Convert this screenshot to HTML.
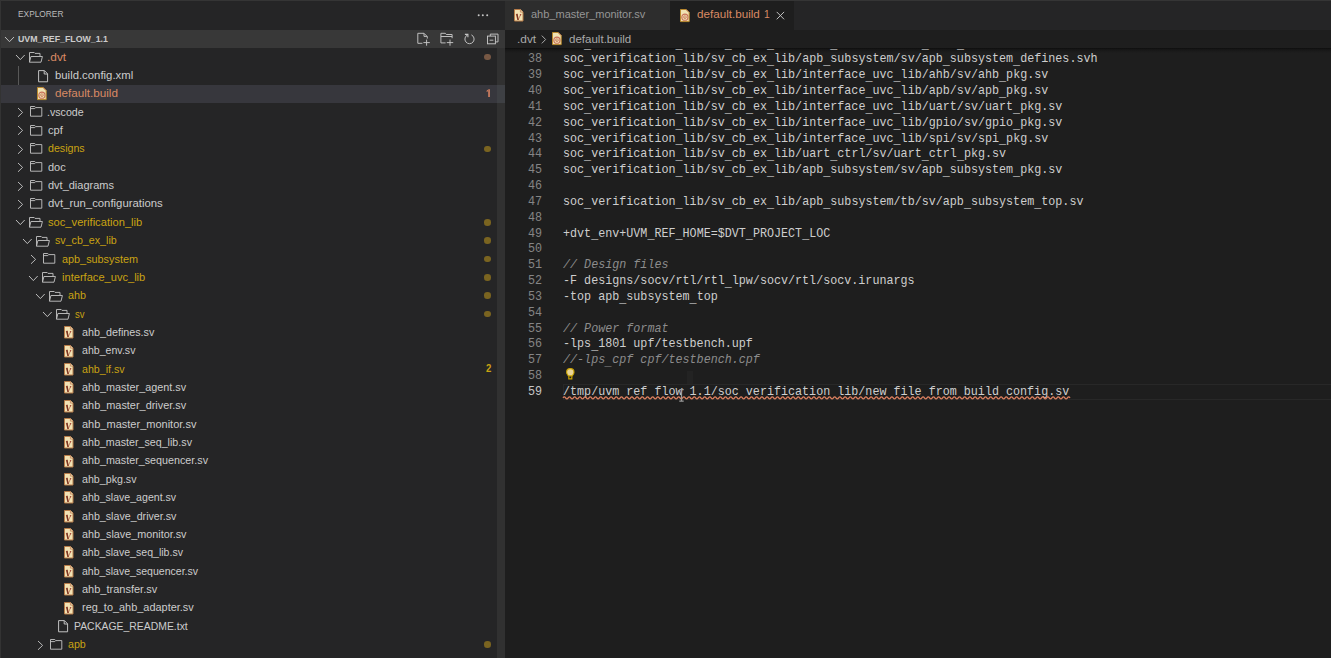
<!DOCTYPE html>
<html><head><meta charset="utf-8">
<style>
html,body{margin:0;padding:0;width:1331px;height:658px;overflow:hidden;background:#1e1e1e;}
body{position:relative;font-family:"Liberation Sans",sans-serif;}
div,svg{position:absolute;box-sizing:border-box;}
.ic{display:block;overflow:visible}
.t{line-height:30px;white-space:pre;transform-origin:0 0;font-family:"Liberation Sans",sans-serif}
#topb{left:0;top:0;width:1331px;height:1px;background:#353535;z-index:5}
#leftb{left:0;top:0;width:1px;height:658px;background:#333333;z-index:5}
#side{left:0;top:0;width:505px;height:658px;background:#252526;overflow:hidden}
#more{left:477px;top:13.8px;width:12px;height:3px}
#hdr{left:0;top:30px;width:505px;height:18px;background:#383838}
.sel{left:0;width:497px;background:#37373d}
.dot{left:484.2px;width:6.6px;height:6.6px;border-radius:50%}
#sbar{left:497px;top:48px;width:8px;height:610px;background:#313131}
#sbarsel{left:497px;top:84.72px;width:8px;height:18.36px;background:#3e4044}
#iguide{left:18px;top:66.36px;width:1px;height:36.72px;background:#585858}
#tabs{left:505px;top:0;width:826px;height:30px;background:#252526}
.tab{top:0;height:30px}
#bc{left:505px;top:30px;width:826px;height:17.5px;background:#1e1e1e}
#edshadow{left:505px;top:47.5px;width:826px;height:5px;background:linear-gradient(#0e0e0e,#171717 35%,rgba(30,30,30,0))}
.ln,.tx,.cm{line-height:30px;font-family:"Liberation Mono",monospace;font-size:12.6px;white-space:pre;transform-origin:0 0;transform:scaleX(0.9304)}
.ln{color:#858585}
.ln.act{color:#c6c6c6}
.tx,.cm{left:563.0px;color:#cecece}
.cm{font-style:italic;color:#8c8c8c}
.us{position:relative;top:1.8px}
#curline{left:563px;top:383.7px;width:768px;height:15.83px;border:1.6px solid #282828;border-right:none}
</style></head><body>
<div id="side">
  <svg id="more" width="12" height="3" viewBox="0 0 12 3"><circle cx="1.7" cy="1.3" r="1" fill="#c5c5c5"/><circle cx="5.8" cy="1.3" r="1" fill="#c5c5c5"/><circle cx="10.2" cy="1.3" r="1" fill="#c5c5c5"/></svg>
  <div id="hdr"></div>
  <svg class="ic" style="left:3.90px;top:35.80px" width="11.0" height="6.7"><path d="M1 1 L5.50 5.70 L10.00 1" fill="none" stroke="#c5c5c5" stroke-width="0.95"/></svg>
  <svg class="ic" style="left:410px;top:30px" width="92" height="18" viewBox="410 30 92 18"><g fill="none" stroke="#c5c5c5" stroke-width="0.95">
    <path d="M417.8 33.3 V43.3 H422.4 M417.8 33.3 H424.0 L427.3 36.6 V38.6 M424.0 33.5 V36.4 H427.1 M423.4 42.6 H429.8 M426.6 39.6 V45.7"/>
    <path d="M445.6 42.9 H440.9 V33.3 H445.3 L446.3 34.5 H452.1 V38.2 M440.9 36.5 H452.1 M446.8 42.6 H453.2 M450.0 39.6 V45.7"/>
    <path d="M467.6 34.9 A4.6 4.6 0 1 0 471.4 34.9"/>
    <path d="M464.9 34.4 H467.9 V37.3" stroke-width="1.1"/>
    <path d="M490.3 36.0 V34.1 H498.0 V41.9 H495.4"/>
    <rect x="487.5" y="36.1" width="7.9" height="7.7" fill="#383838"/>
    <path d="M489.6 40.2 H493.4"/>
  </g></svg>
  <div id="sbar"></div>
  <div id="sbarsel"></div>
  <div id="iguide"></div>
<svg class="ic" style="left:15.00px;top:54.20px" width="10.7" height="6.6"><path d="M1 1 L5.35 5.60 L9.70 1" fill="none" stroke="#c5c5c5" stroke-width="0.95"/></svg>
<svg class="ic" style="left:29.00px;top:51.95px" width="15" height="12" viewBox="0 0 15 12"><path d="M0.5 10.2 V0.5 H5.2 L6.0 1.4 H11.0 V4.3 M0.5 10.2 H12.0 L13.4 4.5 H1.9 L0.5 10.2" fill="none" stroke="#bdbdbd" stroke-width="0.95" stroke-linejoin="round"/></svg>
<div class="dot" style="top:53.70px;background:#775844"></div>
<svg class="ic" style="left:37.57px;top:69.56px" width="11" height="13" viewBox="0 0 11 13"><path d="M0.6 0.6 H6.4 L9.6 3.8 V11.8 H0.6 Z M6.2 0.6 V4.0 H9.6" fill="none" stroke="#c2c2c2" stroke-width="1" stroke-linejoin="round"/></svg>
<div class="sel" style="top:84.72px;height:18.36px"></div>
<svg class="ic" style="left:37.27px;top:87.12px" width="10" height="14" viewBox="0 0 10 14"><path d="M0.5 0.5 H6.2 L9.2 3.5 V12.6 H0.5 Z" fill="#f0e2b2" stroke="#b8882c" stroke-width="1"/><path d="M6.2 0.5 L9.2 3.5" fill="none" stroke="#c87858" stroke-width="0.8"/><circle cx="4.9" cy="8.2" r="3.1" fill="none" stroke="#c8705a" stroke-width="1.1"/><path d="M4.9 6.4 L6.7 8.2 L4.9 10.0 L3.1 8.2 Z" fill="none" stroke="#c8705a" stroke-width="0.8"/><circle cx="4.9" cy="8.2" r="0.6" fill="#b86a40"/></svg>
<svg class="ic" style="left:16.80px;top:107.08px" width="6.6" height="10.8"><path d="M1 1 L5.60 5.40 L1 9.80" fill="none" stroke="#c0c0c0" stroke-width="0.95"/></svg>
<svg class="ic" style="left:29.90px;top:106.38px" width="14" height="12" viewBox="0 0 14 12"><path d="M0.5 0.5 H4.8 L5.8 1.6 H11.8 V10.2 H0.5 Z M0.5 2.6 H4.8 L5.8 1.6" fill="none" stroke="#bdbdbd" stroke-width="0.95"/></svg>
<svg class="ic" style="left:16.80px;top:125.44px" width="6.6" height="10.8"><path d="M1 1 L5.60 5.40 L1 9.80" fill="none" stroke="#c0c0c0" stroke-width="0.95"/></svg>
<svg class="ic" style="left:29.90px;top:124.74px" width="14" height="12" viewBox="0 0 14 12"><path d="M0.5 0.5 H4.8 L5.8 1.6 H11.8 V10.2 H0.5 Z M0.5 2.6 H4.8 L5.8 1.6" fill="none" stroke="#bdbdbd" stroke-width="0.95"/></svg>
<svg class="ic" style="left:16.80px;top:143.80px" width="6.6" height="10.8"><path d="M1 1 L5.60 5.40 L1 9.80" fill="none" stroke="#c0c0c0" stroke-width="0.95"/></svg>
<svg class="ic" style="left:29.90px;top:143.10px" width="14" height="12" viewBox="0 0 14 12"><path d="M0.5 0.5 H4.8 L5.8 1.6 H11.8 V10.2 H0.5 Z M0.5 2.6 H4.8 L5.8 1.6" fill="none" stroke="#bdbdbd" stroke-width="0.95"/></svg>
<div class="dot" style="top:145.50px;background:#7a6420"></div>
<svg class="ic" style="left:16.80px;top:162.16px" width="6.6" height="10.8"><path d="M1 1 L5.60 5.40 L1 9.80" fill="none" stroke="#c0c0c0" stroke-width="0.95"/></svg>
<svg class="ic" style="left:29.90px;top:161.46px" width="14" height="12" viewBox="0 0 14 12"><path d="M0.5 0.5 H4.8 L5.8 1.6 H11.8 V10.2 H0.5 Z M0.5 2.6 H4.8 L5.8 1.6" fill="none" stroke="#bdbdbd" stroke-width="0.95"/></svg>
<svg class="ic" style="left:16.80px;top:180.52px" width="6.6" height="10.8"><path d="M1 1 L5.60 5.40 L1 9.80" fill="none" stroke="#c0c0c0" stroke-width="0.95"/></svg>
<svg class="ic" style="left:29.90px;top:179.82px" width="14" height="12" viewBox="0 0 14 12"><path d="M0.5 0.5 H4.8 L5.8 1.6 H11.8 V10.2 H0.5 Z M0.5 2.6 H4.8 L5.8 1.6" fill="none" stroke="#bdbdbd" stroke-width="0.95"/></svg>
<svg class="ic" style="left:16.80px;top:198.88px" width="6.6" height="10.8"><path d="M1 1 L5.60 5.40 L1 9.80" fill="none" stroke="#c0c0c0" stroke-width="0.95"/></svg>
<svg class="ic" style="left:29.90px;top:198.18px" width="14" height="12" viewBox="0 0 14 12"><path d="M0.5 0.5 H4.8 L5.8 1.6 H11.8 V10.2 H0.5 Z M0.5 2.6 H4.8 L5.8 1.6" fill="none" stroke="#bdbdbd" stroke-width="0.95"/></svg>
<svg class="ic" style="left:15.00px;top:219.44px" width="10.7" height="6.6"><path d="M1 1 L5.35 5.60 L9.70 1" fill="none" stroke="#c5c5c5" stroke-width="0.95"/></svg>
<svg class="ic" style="left:29.00px;top:217.19px" width="15" height="12" viewBox="0 0 15 12"><path d="M0.5 10.2 V0.5 H5.2 L6.0 1.4 H11.0 V4.3 M0.5 10.2 H12.0 L13.4 4.5 H1.9 L0.5 10.2" fill="none" stroke="#bdbdbd" stroke-width="0.95" stroke-linejoin="round"/></svg>
<div class="dot" style="top:218.94px;background:#7a6420"></div>
<svg class="ic" style="left:21.67px;top:237.80px" width="10.7" height="6.6"><path d="M1 1 L5.35 5.60 L9.70 1" fill="none" stroke="#c5c5c5" stroke-width="0.95"/></svg>
<svg class="ic" style="left:35.67px;top:235.55px" width="15" height="12" viewBox="0 0 15 12"><path d="M0.5 10.2 V0.5 H5.2 L6.0 1.4 H11.0 V4.3 M0.5 10.2 H12.0 L13.4 4.5 H1.9 L0.5 10.2" fill="none" stroke="#bdbdbd" stroke-width="0.95" stroke-linejoin="round"/></svg>
<div class="dot" style="top:237.30px;background:#7a6420"></div>
<svg class="ic" style="left:30.13px;top:253.96px" width="6.6" height="10.8"><path d="M1 1 L5.60 5.40 L1 9.80" fill="none" stroke="#c0c0c0" stroke-width="0.95"/></svg>
<svg class="ic" style="left:43.23px;top:253.26px" width="14" height="12" viewBox="0 0 14 12"><path d="M0.5 0.5 H4.8 L5.8 1.6 H11.8 V10.2 H0.5 Z M0.5 2.6 H4.8 L5.8 1.6" fill="none" stroke="#bdbdbd" stroke-width="0.95"/></svg>
<div class="dot" style="top:255.66px;background:#7a6420"></div>
<svg class="ic" style="left:28.33px;top:274.52px" width="10.7" height="6.6"><path d="M1 1 L5.35 5.60 L9.70 1" fill="none" stroke="#c5c5c5" stroke-width="0.95"/></svg>
<svg class="ic" style="left:42.33px;top:272.27px" width="15" height="12" viewBox="0 0 15 12"><path d="M0.5 10.2 V0.5 H5.2 L6.0 1.4 H11.0 V4.3 M0.5 10.2 H12.0 L13.4 4.5 H1.9 L0.5 10.2" fill="none" stroke="#bdbdbd" stroke-width="0.95" stroke-linejoin="round"/></svg>
<div class="dot" style="top:274.02px;background:#7a6420"></div>
<svg class="ic" style="left:35.00px;top:292.88px" width="10.7" height="6.6"><path d="M1 1 L5.35 5.60 L9.70 1" fill="none" stroke="#c5c5c5" stroke-width="0.95"/></svg>
<svg class="ic" style="left:49.00px;top:290.63px" width="15" height="12" viewBox="0 0 15 12"><path d="M0.5 10.2 V0.5 H5.2 L6.0 1.4 H11.0 V4.3 M0.5 10.2 H12.0 L13.4 4.5 H1.9 L0.5 10.2" fill="none" stroke="#bdbdbd" stroke-width="0.95" stroke-linejoin="round"/></svg>
<div class="dot" style="top:292.38px;background:#7a6420"></div>
<svg class="ic" style="left:41.67px;top:311.24px" width="10.7" height="6.6"><path d="M1 1 L5.35 5.60 L9.70 1" fill="none" stroke="#c5c5c5" stroke-width="0.95"/></svg>
<svg class="ic" style="left:55.67px;top:308.99px" width="15" height="12" viewBox="0 0 15 12"><path d="M0.5 10.2 V0.5 H5.2 L6.0 1.4 H11.0 V4.3 M0.5 10.2 H12.0 L13.4 4.5 H1.9 L0.5 10.2" fill="none" stroke="#bdbdbd" stroke-width="0.95" stroke-linejoin="round"/></svg>
<div class="dot" style="top:310.74px;background:#7a6420"></div>
<svg class="ic" style="left:63.54px;top:326.15px" width="10" height="13" viewBox="0 0 10 13"><path d="M0.5 0.5 H6.4 L9.0 3.1 V12.0 H0.5 Z" fill="#f2e2b4" stroke="#b87c48" stroke-width="1"/><path d="M6.4 0.5 V3.1 H9.0" fill="#eadcb0" stroke="#c08058" stroke-width="0.8"/><path d="M4.3 10.6 L6.7 5.4" stroke="#b86a50" stroke-width="0.8"/><path d="M1.8 4.9 L3.6 4.8 L4.9 10.9 L3.3 11.0 Z" fill="#a85238"/><path d="M2.5 4.9 L3.4 4.8 L4.5 10.9 L3.7 11.0 Z" fill="#6a3220"/><path d="M5.7 5.0 L7.4 5.0 L6.5 7.3 Z" fill="#a84c3c"/></svg>
<svg class="ic" style="left:63.54px;top:344.51px" width="10" height="13" viewBox="0 0 10 13"><path d="M0.5 0.5 H6.4 L9.0 3.1 V12.0 H0.5 Z" fill="#f2e2b4" stroke="#b87c48" stroke-width="1"/><path d="M6.4 0.5 V3.1 H9.0" fill="#eadcb0" stroke="#c08058" stroke-width="0.8"/><path d="M4.3 10.6 L6.7 5.4" stroke="#b86a50" stroke-width="0.8"/><path d="M1.8 4.9 L3.6 4.8 L4.9 10.9 L3.3 11.0 Z" fill="#a85238"/><path d="M2.5 4.9 L3.4 4.8 L4.5 10.9 L3.7 11.0 Z" fill="#6a3220"/><path d="M5.7 5.0 L7.4 5.0 L6.5 7.3 Z" fill="#a84c3c"/></svg>
<svg class="ic" style="left:63.54px;top:362.87px" width="10" height="13" viewBox="0 0 10 13"><path d="M0.5 0.5 H6.4 L9.0 3.1 V12.0 H0.5 Z" fill="#f2e2b4" stroke="#b87c48" stroke-width="1"/><path d="M6.4 0.5 V3.1 H9.0" fill="#eadcb0" stroke="#c08058" stroke-width="0.8"/><path d="M4.3 10.6 L6.7 5.4" stroke="#b86a50" stroke-width="0.8"/><path d="M1.8 4.9 L3.6 4.8 L4.9 10.9 L3.3 11.0 Z" fill="#a85238"/><path d="M2.5 4.9 L3.4 4.8 L4.5 10.9 L3.7 11.0 Z" fill="#6a3220"/><path d="M5.7 5.0 L7.4 5.0 L6.5 7.3 Z" fill="#a84c3c"/></svg>
<svg class="ic" style="left:63.54px;top:381.23px" width="10" height="13" viewBox="0 0 10 13"><path d="M0.5 0.5 H6.4 L9.0 3.1 V12.0 H0.5 Z" fill="#f2e2b4" stroke="#b87c48" stroke-width="1"/><path d="M6.4 0.5 V3.1 H9.0" fill="#eadcb0" stroke="#c08058" stroke-width="0.8"/><path d="M4.3 10.6 L6.7 5.4" stroke="#b86a50" stroke-width="0.8"/><path d="M1.8 4.9 L3.6 4.8 L4.9 10.9 L3.3 11.0 Z" fill="#a85238"/><path d="M2.5 4.9 L3.4 4.8 L4.5 10.9 L3.7 11.0 Z" fill="#6a3220"/><path d="M5.7 5.0 L7.4 5.0 L6.5 7.3 Z" fill="#a84c3c"/></svg>
<svg class="ic" style="left:63.54px;top:399.59px" width="10" height="13" viewBox="0 0 10 13"><path d="M0.5 0.5 H6.4 L9.0 3.1 V12.0 H0.5 Z" fill="#f2e2b4" stroke="#b87c48" stroke-width="1"/><path d="M6.4 0.5 V3.1 H9.0" fill="#eadcb0" stroke="#c08058" stroke-width="0.8"/><path d="M4.3 10.6 L6.7 5.4" stroke="#b86a50" stroke-width="0.8"/><path d="M1.8 4.9 L3.6 4.8 L4.9 10.9 L3.3 11.0 Z" fill="#a85238"/><path d="M2.5 4.9 L3.4 4.8 L4.5 10.9 L3.7 11.0 Z" fill="#6a3220"/><path d="M5.7 5.0 L7.4 5.0 L6.5 7.3 Z" fill="#a84c3c"/></svg>
<svg class="ic" style="left:63.54px;top:417.95px" width="10" height="13" viewBox="0 0 10 13"><path d="M0.5 0.5 H6.4 L9.0 3.1 V12.0 H0.5 Z" fill="#f2e2b4" stroke="#b87c48" stroke-width="1"/><path d="M6.4 0.5 V3.1 H9.0" fill="#eadcb0" stroke="#c08058" stroke-width="0.8"/><path d="M4.3 10.6 L6.7 5.4" stroke="#b86a50" stroke-width="0.8"/><path d="M1.8 4.9 L3.6 4.8 L4.9 10.9 L3.3 11.0 Z" fill="#a85238"/><path d="M2.5 4.9 L3.4 4.8 L4.5 10.9 L3.7 11.0 Z" fill="#6a3220"/><path d="M5.7 5.0 L7.4 5.0 L6.5 7.3 Z" fill="#a84c3c"/></svg>
<svg class="ic" style="left:63.54px;top:436.31px" width="10" height="13" viewBox="0 0 10 13"><path d="M0.5 0.5 H6.4 L9.0 3.1 V12.0 H0.5 Z" fill="#f2e2b4" stroke="#b87c48" stroke-width="1"/><path d="M6.4 0.5 V3.1 H9.0" fill="#eadcb0" stroke="#c08058" stroke-width="0.8"/><path d="M4.3 10.6 L6.7 5.4" stroke="#b86a50" stroke-width="0.8"/><path d="M1.8 4.9 L3.6 4.8 L4.9 10.9 L3.3 11.0 Z" fill="#a85238"/><path d="M2.5 4.9 L3.4 4.8 L4.5 10.9 L3.7 11.0 Z" fill="#6a3220"/><path d="M5.7 5.0 L7.4 5.0 L6.5 7.3 Z" fill="#a84c3c"/></svg>
<svg class="ic" style="left:63.54px;top:454.67px" width="10" height="13" viewBox="0 0 10 13"><path d="M0.5 0.5 H6.4 L9.0 3.1 V12.0 H0.5 Z" fill="#f2e2b4" stroke="#b87c48" stroke-width="1"/><path d="M6.4 0.5 V3.1 H9.0" fill="#eadcb0" stroke="#c08058" stroke-width="0.8"/><path d="M4.3 10.6 L6.7 5.4" stroke="#b86a50" stroke-width="0.8"/><path d="M1.8 4.9 L3.6 4.8 L4.9 10.9 L3.3 11.0 Z" fill="#a85238"/><path d="M2.5 4.9 L3.4 4.8 L4.5 10.9 L3.7 11.0 Z" fill="#6a3220"/><path d="M5.7 5.0 L7.4 5.0 L6.5 7.3 Z" fill="#a84c3c"/></svg>
<svg class="ic" style="left:63.54px;top:473.03px" width="10" height="13" viewBox="0 0 10 13"><path d="M0.5 0.5 H6.4 L9.0 3.1 V12.0 H0.5 Z" fill="#f2e2b4" stroke="#b87c48" stroke-width="1"/><path d="M6.4 0.5 V3.1 H9.0" fill="#eadcb0" stroke="#c08058" stroke-width="0.8"/><path d="M4.3 10.6 L6.7 5.4" stroke="#b86a50" stroke-width="0.8"/><path d="M1.8 4.9 L3.6 4.8 L4.9 10.9 L3.3 11.0 Z" fill="#a85238"/><path d="M2.5 4.9 L3.4 4.8 L4.5 10.9 L3.7 11.0 Z" fill="#6a3220"/><path d="M5.7 5.0 L7.4 5.0 L6.5 7.3 Z" fill="#a84c3c"/></svg>
<svg class="ic" style="left:63.54px;top:491.39px" width="10" height="13" viewBox="0 0 10 13"><path d="M0.5 0.5 H6.4 L9.0 3.1 V12.0 H0.5 Z" fill="#f2e2b4" stroke="#b87c48" stroke-width="1"/><path d="M6.4 0.5 V3.1 H9.0" fill="#eadcb0" stroke="#c08058" stroke-width="0.8"/><path d="M4.3 10.6 L6.7 5.4" stroke="#b86a50" stroke-width="0.8"/><path d="M1.8 4.9 L3.6 4.8 L4.9 10.9 L3.3 11.0 Z" fill="#a85238"/><path d="M2.5 4.9 L3.4 4.8 L4.5 10.9 L3.7 11.0 Z" fill="#6a3220"/><path d="M5.7 5.0 L7.4 5.0 L6.5 7.3 Z" fill="#a84c3c"/></svg>
<svg class="ic" style="left:63.54px;top:509.75px" width="10" height="13" viewBox="0 0 10 13"><path d="M0.5 0.5 H6.4 L9.0 3.1 V12.0 H0.5 Z" fill="#f2e2b4" stroke="#b87c48" stroke-width="1"/><path d="M6.4 0.5 V3.1 H9.0" fill="#eadcb0" stroke="#c08058" stroke-width="0.8"/><path d="M4.3 10.6 L6.7 5.4" stroke="#b86a50" stroke-width="0.8"/><path d="M1.8 4.9 L3.6 4.8 L4.9 10.9 L3.3 11.0 Z" fill="#a85238"/><path d="M2.5 4.9 L3.4 4.8 L4.5 10.9 L3.7 11.0 Z" fill="#6a3220"/><path d="M5.7 5.0 L7.4 5.0 L6.5 7.3 Z" fill="#a84c3c"/></svg>
<svg class="ic" style="left:63.54px;top:528.11px" width="10" height="13" viewBox="0 0 10 13"><path d="M0.5 0.5 H6.4 L9.0 3.1 V12.0 H0.5 Z" fill="#f2e2b4" stroke="#b87c48" stroke-width="1"/><path d="M6.4 0.5 V3.1 H9.0" fill="#eadcb0" stroke="#c08058" stroke-width="0.8"/><path d="M4.3 10.6 L6.7 5.4" stroke="#b86a50" stroke-width="0.8"/><path d="M1.8 4.9 L3.6 4.8 L4.9 10.9 L3.3 11.0 Z" fill="#a85238"/><path d="M2.5 4.9 L3.4 4.8 L4.5 10.9 L3.7 11.0 Z" fill="#6a3220"/><path d="M5.7 5.0 L7.4 5.0 L6.5 7.3 Z" fill="#a84c3c"/></svg>
<svg class="ic" style="left:63.54px;top:546.47px" width="10" height="13" viewBox="0 0 10 13"><path d="M0.5 0.5 H6.4 L9.0 3.1 V12.0 H0.5 Z" fill="#f2e2b4" stroke="#b87c48" stroke-width="1"/><path d="M6.4 0.5 V3.1 H9.0" fill="#eadcb0" stroke="#c08058" stroke-width="0.8"/><path d="M4.3 10.6 L6.7 5.4" stroke="#b86a50" stroke-width="0.8"/><path d="M1.8 4.9 L3.6 4.8 L4.9 10.9 L3.3 11.0 Z" fill="#a85238"/><path d="M2.5 4.9 L3.4 4.8 L4.5 10.9 L3.7 11.0 Z" fill="#6a3220"/><path d="M5.7 5.0 L7.4 5.0 L6.5 7.3 Z" fill="#a84c3c"/></svg>
<svg class="ic" style="left:63.54px;top:564.83px" width="10" height="13" viewBox="0 0 10 13"><path d="M0.5 0.5 H6.4 L9.0 3.1 V12.0 H0.5 Z" fill="#f2e2b4" stroke="#b87c48" stroke-width="1"/><path d="M6.4 0.5 V3.1 H9.0" fill="#eadcb0" stroke="#c08058" stroke-width="0.8"/><path d="M4.3 10.6 L6.7 5.4" stroke="#b86a50" stroke-width="0.8"/><path d="M1.8 4.9 L3.6 4.8 L4.9 10.9 L3.3 11.0 Z" fill="#a85238"/><path d="M2.5 4.9 L3.4 4.8 L4.5 10.9 L3.7 11.0 Z" fill="#6a3220"/><path d="M5.7 5.0 L7.4 5.0 L6.5 7.3 Z" fill="#a84c3c"/></svg>
<svg class="ic" style="left:63.54px;top:583.19px" width="10" height="13" viewBox="0 0 10 13"><path d="M0.5 0.5 H6.4 L9.0 3.1 V12.0 H0.5 Z" fill="#f2e2b4" stroke="#b87c48" stroke-width="1"/><path d="M6.4 0.5 V3.1 H9.0" fill="#eadcb0" stroke="#c08058" stroke-width="0.8"/><path d="M4.3 10.6 L6.7 5.4" stroke="#b86a50" stroke-width="0.8"/><path d="M1.8 4.9 L3.6 4.8 L4.9 10.9 L3.3 11.0 Z" fill="#a85238"/><path d="M2.5 4.9 L3.4 4.8 L4.5 10.9 L3.7 11.0 Z" fill="#6a3220"/><path d="M5.7 5.0 L7.4 5.0 L6.5 7.3 Z" fill="#a84c3c"/></svg>
<svg class="ic" style="left:63.54px;top:601.55px" width="10" height="13" viewBox="0 0 10 13"><path d="M0.5 0.5 H6.4 L9.0 3.1 V12.0 H0.5 Z" fill="#f2e2b4" stroke="#b87c48" stroke-width="1"/><path d="M6.4 0.5 V3.1 H9.0" fill="#eadcb0" stroke="#c08058" stroke-width="0.8"/><path d="M4.3 10.6 L6.7 5.4" stroke="#b86a50" stroke-width="0.8"/><path d="M1.8 4.9 L3.6 4.8 L4.9 10.9 L3.3 11.0 Z" fill="#a85238"/><path d="M2.5 4.9 L3.4 4.8 L4.5 10.9 L3.7 11.0 Z" fill="#6a3220"/><path d="M5.7 5.0 L7.4 5.0 L6.5 7.3 Z" fill="#a84c3c"/></svg>
<svg class="ic" style="left:57.57px;top:620.36px" width="11" height="13" viewBox="0 0 11 13"><path d="M0.6 0.6 H6.4 L9.6 3.8 V11.8 H0.6 Z M6.2 0.6 V4.0 H9.6" fill="none" stroke="#c2c2c2" stroke-width="1" stroke-linejoin="round"/></svg>
<svg class="ic" style="left:36.80px;top:639.52px" width="6.6" height="10.8"><path d="M1 1 L5.60 5.40 L1 9.80" fill="none" stroke="#c0c0c0" stroke-width="0.95"/></svg>
<svg class="ic" style="left:49.90px;top:638.82px" width="14" height="12" viewBox="0 0 14 12"><path d="M0.5 0.5 H4.8 L5.8 1.6 H11.8 V10.2 H0.5 Z M0.5 2.6 H4.8 L5.8 1.6" fill="none" stroke="#bdbdbd" stroke-width="0.95"/></svg>
<div class="dot" style="top:641.22px;background:#7a6420"></div>
  <svg class="ic" style="left:484px;top:87px" width="8" height="11" viewBox="484 87 8 11"><path d="M488.2 89.3 H489.9 V96.9 H488.2 Z M488.4 89.3 L486.4 90.9 L486.9 91.9 L488.5 90.8 Z" fill="#cf7e60"/></svg>
</div>
<div id="tabs"></div>
<div class="tab" style="left:505px;width:165px;background:#2d2d2d"></div>
<svg class="ic" style="left:514.00px;top:8.60px" width="10" height="13" viewBox="0 0 10 13"><path d="M0.5 0.5 H6.4 L9.0 3.1 V12.0 H0.5 Z" fill="#f2e2b4" stroke="#b87c48" stroke-width="1"/><path d="M6.4 0.5 V3.1 H9.0" fill="#eadcb0" stroke="#c08058" stroke-width="0.8"/><path d="M4.3 10.6 L6.7 5.4" stroke="#b86a50" stroke-width="0.8"/><path d="M1.8 4.9 L3.6 4.8 L4.9 10.9 L3.3 11.0 Z" fill="#a85238"/><path d="M2.5 4.9 L3.4 4.8 L4.5 10.9 L3.7 11.0 Z" fill="#6a3220"/><path d="M5.7 5.0 L7.4 5.0 L6.5 7.3 Z" fill="#a84c3c"/></svg>
<div class="tab" style="left:670px;width:124px;background:#1e1e1e"></div>
<svg class="ic" style="left:680.00px;top:8.60px" width="10" height="14" viewBox="0 0 10 14"><path d="M0.5 0.5 H6.2 L9.2 3.5 V12.6 H0.5 Z" fill="#f0e2b2" stroke="#b8882c" stroke-width="1"/><path d="M6.2 0.5 L9.2 3.5" fill="none" stroke="#c87858" stroke-width="0.8"/><circle cx="4.9" cy="8.2" r="3.1" fill="none" stroke="#c8705a" stroke-width="1.1"/><path d="M4.9 6.4 L6.7 8.2 L4.9 10.0 L3.1 8.2 Z" fill="none" stroke="#c8705a" stroke-width="0.8"/><circle cx="4.9" cy="8.2" r="0.6" fill="#b86a40"/></svg>
<svg class="ic" style="left:776px;top:11px" width="9" height="9" viewBox="0 0 9 9"><path d="M0.7 0.9 L8.1 8.3 M8.1 0.9 L0.7 8.3" stroke="#c8c8c8" stroke-width="0.95"/></svg>
<div id="bc"></div>
<svg class="ic" style="left:541px;top:35px" width="6" height="9" viewBox="0 0 6 9"><path d="M0.8 0.6 L4.6 4.5 L0.8 8.4" fill="none" stroke="#a9a9a9" stroke-width="1"/></svg>
<svg class="ic" style="left:551.60px;top:32.20px" width="10" height="14" viewBox="0 0 10 14"><path d="M0.5 0.5 H6.2 L9.2 3.5 V12.6 H0.5 Z" fill="#f0e2b2" stroke="#b8882c" stroke-width="1"/><path d="M6.2 0.5 L9.2 3.5" fill="none" stroke="#c87858" stroke-width="0.8"/><circle cx="4.9" cy="8.2" r="3.1" fill="none" stroke="#c8705a" stroke-width="1.1"/><path d="M4.9 6.4 L6.7 8.2 L4.9 10.0 L3.1 8.2 Z" fill="none" stroke="#c8705a" stroke-width="0.8"/><circle cx="4.9" cy="8.2" r="0.6" fill="#b86a40"/></svg>
<div id="edshadow"></div>
<div id="editor" style="left:505px;top:48px;width:826px;height:610px;overflow:hidden">
  <div style="left:-505px;top:-48px;width:1331px;height:658px">
  <div id="curline"></div>
<div class="tx" style="top:28.64px">soc<span class="us">_</span>verification<span class="us">_</span>lib/sv<span class="us">_</span>cb<span class="us">_</span>ex<span class="us">_</span>lib/uart<span class="us">_</span>ctrl/sv/uart<span class="us">_</span>ctrl<span class="us">_</span>defines.svh</div>
<div class="ln" style="top:44.47px;left:527.53px">38</div>
<div class="tx" style="top:44.47px">soc<span class="us">_</span>verification<span class="us">_</span>lib/sv<span class="us">_</span>cb<span class="us">_</span>ex<span class="us">_</span>lib/apb<span class="us">_</span>subsystem/sv/apb<span class="us">_</span>subsystem<span class="us">_</span>defines.svh</div>
<div class="ln" style="top:60.30px;left:527.53px">39</div>
<div class="tx" style="top:60.30px">soc<span class="us">_</span>verification<span class="us">_</span>lib/sv<span class="us">_</span>cb<span class="us">_</span>ex<span class="us">_</span>lib/interface<span class="us">_</span>uvc<span class="us">_</span>lib/ahb/sv/ahb<span class="us">_</span>pkg.sv</div>
<div class="ln" style="top:76.13px;left:527.53px">40</div>
<div class="tx" style="top:76.13px">soc<span class="us">_</span>verification<span class="us">_</span>lib/sv<span class="us">_</span>cb<span class="us">_</span>ex<span class="us">_</span>lib/interface<span class="us">_</span>uvc<span class="us">_</span>lib/apb/sv/apb<span class="us">_</span>pkg.sv</div>
<div class="ln" style="top:91.96px;left:527.53px">41</div>
<div class="tx" style="top:91.96px">soc<span class="us">_</span>verification<span class="us">_</span>lib/sv<span class="us">_</span>cb<span class="us">_</span>ex<span class="us">_</span>lib/interface<span class="us">_</span>uvc<span class="us">_</span>lib/uart/sv/uart<span class="us">_</span>pkg.sv</div>
<div class="ln" style="top:107.79px;left:527.53px">42</div>
<div class="tx" style="top:107.79px">soc<span class="us">_</span>verification<span class="us">_</span>lib/sv<span class="us">_</span>cb<span class="us">_</span>ex<span class="us">_</span>lib/interface<span class="us">_</span>uvc<span class="us">_</span>lib/gpio/sv/gpio<span class="us">_</span>pkg.sv</div>
<div class="ln" style="top:123.62px;left:527.53px">43</div>
<div class="tx" style="top:123.62px">soc<span class="us">_</span>verification<span class="us">_</span>lib/sv<span class="us">_</span>cb<span class="us">_</span>ex<span class="us">_</span>lib/interface<span class="us">_</span>uvc<span class="us">_</span>lib/spi/sv/spi<span class="us">_</span>pkg.sv</div>
<div class="ln" style="top:139.45px;left:527.53px">44</div>
<div class="tx" style="top:139.45px">soc<span class="us">_</span>verification<span class="us">_</span>lib/sv<span class="us">_</span>cb<span class="us">_</span>ex<span class="us">_</span>lib/uart<span class="us">_</span>ctrl/sv/uart<span class="us">_</span>ctrl<span class="us">_</span>pkg.sv</div>
<div class="ln" style="top:155.28px;left:527.53px">45</div>
<div class="tx" style="top:155.28px">soc<span class="us">_</span>verification<span class="us">_</span>lib/sv<span class="us">_</span>cb<span class="us">_</span>ex<span class="us">_</span>lib/apb<span class="us">_</span>subsystem/sv/apb<span class="us">_</span>subsystem<span class="us">_</span>pkg.sv</div>
<div class="ln" style="top:171.11px;left:527.53px">46</div>
<div class="ln" style="top:186.94px;left:527.53px">47</div>
<div class="tx" style="top:186.94px">soc<span class="us">_</span>verification<span class="us">_</span>lib/sv<span class="us">_</span>cb<span class="us">_</span>ex<span class="us">_</span>lib/apb<span class="us">_</span>subsystem/tb/sv/apb<span class="us">_</span>subsystem<span class="us">_</span>top.sv</div>
<div class="ln" style="top:202.77px;left:527.53px">48</div>
<div class="ln" style="top:218.60px;left:527.53px">49</div>
<div class="tx" style="top:218.60px">+dvt<span class="us">_</span>env+UVM<span class="us">_</span>REF<span class="us">_</span>HOME=$DVT<span class="us">_</span>PROJECT<span class="us">_</span>LOC</div>
<div class="ln" style="top:234.43px;left:527.53px">50</div>
<div class="ln" style="top:250.26px;left:527.53px">51</div>
<div class="cm" style="top:250.26px">// Design files</div>
<div class="ln" style="top:266.09px;left:527.53px">52</div>
<div class="tx" style="top:266.09px">-F designs/socv/rtl/rtl<span class="us">_</span>lpw/socv/rtl/socv.irunargs</div>
<div class="ln" style="top:281.92px;left:527.53px">53</div>
<div class="tx" style="top:281.92px">-top apb<span class="us">_</span>subsystem<span class="us">_</span>top</div>
<div class="ln" style="top:297.75px;left:527.53px">54</div>
<div class="ln" style="top:313.58px;left:527.53px">55</div>
<div class="cm" style="top:313.58px">// Power format</div>
<div class="ln" style="top:329.41px;left:527.53px">56</div>
<div class="tx" style="top:329.41px">-lps<span class="us">_</span>1801 upf/testbench.upf</div>
<div class="ln" style="top:345.24px;left:527.53px">57</div>
<div class="cm" style="top:345.24px">//-lps<span class="us">_</span>cpf cpf/testbench.cpf</div>
<div class="ln" style="top:361.07px;left:527.53px">58</div>
<div class="ln act" style="top:376.90px;left:527.53px">59</div>
<div class="tx" style="top:376.90px">/tmp/uvm ref flow 1.1/soc verification lib/new file from build config.sv</div>
  <svg class="ic" style="left:566px;top:368px" width="9" height="12" viewBox="0 0 9 12"><path d="M4.3 0.6 C6.6 0.6 8 2.2 8 4.2 C8 5.9 6.8 6.8 6.2 7.9 H2.4 C1.8 6.8 0.6 5.9 0.6 4.2 C0.6 2.2 2 0.6 4.3 0.6 Z" fill="#e8d49a" stroke="#c9a200" stroke-width="1.1"/><path d="M2.8 8.3 V10.8 H5.8 V8.3" fill="none" stroke="#c9a200" stroke-width="1.2"/></svg>
  <svg class="ic" style="left:563px;top:396.3px" width="507" height="4"><path d="M0 1.9 Q1.30 0.0 2.60 1.9 Q3.90 3.8 5.20 1.9 Q6.50 0.0 7.80 1.9 Q9.10 3.8 10.40 1.9 Q11.70 0.0 13.00 1.9 Q14.30 3.8 15.60 1.9 Q16.90 0.0 18.20 1.9 Q19.50 3.8 20.80 1.9 Q22.10 0.0 23.40 1.9 Q24.70 3.8 26.00 1.9 Q27.30 0.0 28.60 1.9 Q29.90 3.8 31.20 1.9 Q32.50 0.0 33.80 1.9 Q35.10 3.8 36.40 1.9 Q37.70 0.0 39.00 1.9 Q40.30 3.8 41.60 1.9 Q42.90 0.0 44.20 1.9 Q45.50 3.8 46.80 1.9 Q48.10 0.0 49.40 1.9 Q50.70 3.8 52.00 1.9 Q53.30 0.0 54.60 1.9 Q55.90 3.8 57.20 1.9 Q58.50 0.0 59.80 1.9 Q61.10 3.8 62.40 1.9 Q63.70 0.0 65.00 1.9 Q66.30 3.8 67.60 1.9 Q68.90 0.0 70.20 1.9 Q71.50 3.8 72.80 1.9 Q74.10 0.0 75.40 1.9 Q76.70 3.8 78.00 1.9 Q79.30 0.0 80.60 1.9 Q81.90 3.8 83.20 1.9 Q84.50 0.0 85.80 1.9 Q87.10 3.8 88.40 1.9 Q89.70 0.0 91.00 1.9 Q92.30 3.8 93.60 1.9 Q94.90 0.0 96.20 1.9 Q97.50 3.8 98.80 1.9 Q100.10 0.0 101.40 1.9 Q102.70 3.8 104.00 1.9 Q105.30 0.0 106.60 1.9 Q107.90 3.8 109.20 1.9 Q110.50 0.0 111.80 1.9 Q113.10 3.8 114.40 1.9 Q115.70 0.0 117.00 1.9 Q118.30 3.8 119.60 1.9 Q120.90 0.0 122.20 1.9 Q123.50 3.8 124.80 1.9 Q126.10 0.0 127.40 1.9 Q128.70 3.8 130.00 1.9 Q131.30 0.0 132.60 1.9 Q133.90 3.8 135.20 1.9 Q136.50 0.0 137.80 1.9 Q139.10 3.8 140.40 1.9 Q141.70 0.0 143.00 1.9 Q144.30 3.8 145.60 1.9 Q146.90 0.0 148.20 1.9 Q149.50 3.8 150.80 1.9 Q152.10 0.0 153.40 1.9 Q154.70 3.8 156.00 1.9 Q157.30 0.0 158.60 1.9 Q159.90 3.8 161.20 1.9 Q162.50 0.0 163.80 1.9 Q165.10 3.8 166.40 1.9 Q167.70 0.0 169.00 1.9 Q170.30 3.8 171.60 1.9 Q172.90 0.0 174.20 1.9 Q175.50 3.8 176.80 1.9 Q178.10 0.0 179.40 1.9 Q180.70 3.8 182.00 1.9 Q183.30 0.0 184.60 1.9 Q185.90 3.8 187.20 1.9 Q188.50 0.0 189.80 1.9 Q191.10 3.8 192.40 1.9 Q193.70 0.0 195.00 1.9 Q196.30 3.8 197.60 1.9 Q198.90 0.0 200.20 1.9 Q201.50 3.8 202.80 1.9 Q204.10 0.0 205.40 1.9 Q206.70 3.8 208.00 1.9 Q209.30 0.0 210.60 1.9 Q211.90 3.8 213.20 1.9 Q214.50 0.0 215.80 1.9 Q217.10 3.8 218.40 1.9 Q219.70 0.0 221.00 1.9 Q222.30 3.8 223.60 1.9 Q224.90 0.0 226.20 1.9 Q227.50 3.8 228.80 1.9 Q230.10 0.0 231.40 1.9 Q232.70 3.8 234.00 1.9 Q235.30 0.0 236.60 1.9 Q237.90 3.8 239.20 1.9 Q240.50 0.0 241.80 1.9 Q243.10 3.8 244.40 1.9 Q245.70 0.0 247.00 1.9 Q248.30 3.8 249.60 1.9 Q250.90 0.0 252.20 1.9 Q253.50 3.8 254.80 1.9 Q256.10 0.0 257.40 1.9 Q258.70 3.8 260.00 1.9 Q261.30 0.0 262.60 1.9 Q263.90 3.8 265.20 1.9 Q266.50 0.0 267.80 1.9 Q269.10 3.8 270.40 1.9 Q271.70 0.0 273.00 1.9 Q274.30 3.8 275.60 1.9 Q276.90 0.0 278.20 1.9 Q279.50 3.8 280.80 1.9 Q282.10 0.0 283.40 1.9 Q284.70 3.8 286.00 1.9 Q287.30 0.0 288.60 1.9 Q289.90 3.8 291.20 1.9 Q292.50 0.0 293.80 1.9 Q295.10 3.8 296.40 1.9 Q297.70 0.0 299.00 1.9 Q300.30 3.8 301.60 1.9 Q302.90 0.0 304.20 1.9 Q305.50 3.8 306.80 1.9 Q308.10 0.0 309.40 1.9 Q310.70 3.8 312.00 1.9 Q313.30 0.0 314.60 1.9 Q315.90 3.8 317.20 1.9 Q318.50 0.0 319.80 1.9 Q321.10 3.8 322.40 1.9 Q323.70 0.0 325.00 1.9 Q326.30 3.8 327.60 1.9 Q328.90 0.0 330.20 1.9 Q331.50 3.8 332.80 1.9 Q334.10 0.0 335.40 1.9 Q336.70 3.8 338.00 1.9 Q339.30 0.0 340.60 1.9 Q341.90 3.8 343.20 1.9 Q344.50 0.0 345.80 1.9 Q347.10 3.8 348.40 1.9 Q349.70 0.0 351.00 1.9 Q352.30 3.8 353.60 1.9 Q354.90 0.0 356.20 1.9 Q357.50 3.8 358.80 1.9 Q360.10 0.0 361.40 1.9 Q362.70 3.8 364.00 1.9 Q365.30 0.0 366.60 1.9 Q367.90 3.8 369.20 1.9 Q370.50 0.0 371.80 1.9 Q373.10 3.8 374.40 1.9 Q375.70 0.0 377.00 1.9 Q378.30 3.8 379.60 1.9 Q380.90 0.0 382.20 1.9 Q383.50 3.8 384.80 1.9 Q386.10 0.0 387.40 1.9 Q388.70 3.8 390.00 1.9 Q391.30 0.0 392.60 1.9 Q393.90 3.8 395.20 1.9 Q396.50 0.0 397.80 1.9 Q399.10 3.8 400.40 1.9 Q401.70 0.0 403.00 1.9 Q404.30 3.8 405.60 1.9 Q406.90 0.0 408.20 1.9 Q409.50 3.8 410.80 1.9 Q412.10 0.0 413.40 1.9 Q414.70 3.8 416.00 1.9 Q417.30 0.0 418.60 1.9 Q419.90 3.8 421.20 1.9 Q422.50 0.0 423.80 1.9 Q425.10 3.8 426.40 1.9 Q427.70 0.0 429.00 1.9 Q430.30 3.8 431.60 1.9 Q432.90 0.0 434.20 1.9 Q435.50 3.8 436.80 1.9 Q438.10 0.0 439.40 1.9 Q440.70 3.8 442.00 1.9 Q443.30 0.0 444.60 1.9 Q445.90 3.8 447.20 1.9 Q448.50 0.0 449.80 1.9 Q451.10 3.8 452.40 1.9 Q453.70 0.0 455.00 1.9 Q456.30 3.8 457.60 1.9 Q458.90 0.0 460.20 1.9 Q461.50 3.8 462.80 1.9 Q464.10 0.0 465.40 1.9 Q466.70 3.8 468.00 1.9 Q469.30 0.0 470.60 1.9 Q471.90 3.8 473.20 1.9 Q474.50 0.0 475.80 1.9 Q477.10 3.8 478.40 1.9 Q479.70 0.0 481.00 1.9 Q482.30 3.8 483.60 1.9 Q484.90 0.0 486.20 1.9 Q487.50 3.8 488.80 1.9 Q490.10 0.0 491.40 1.9 Q492.70 3.8 494.00 1.9 Q495.30 0.0 496.60 1.9 Q497.90 3.8 499.20 1.9 Q500.50 0.0 501.80 1.9 Q503.10 3.8 504.40 1.9 Q505.70 0.0 507.00 1.9 " fill="none" stroke="#dc8060" stroke-width="1.3"/></svg>
  <div style="left:687.4px;top:371px;width:5.4px;height:13.4px;background:#232323"></div>
  <svg class="ic" style="left:678.6px;top:389.2px" width="5" height="13" viewBox="0 0 5 13"><path d="M0.3 0.6 H4.7 M2.5 0.6 V12.2 M0.3 12.2 H4.7" fill="none" stroke="#9a9a9a" stroke-width="1.2"/></svg>
  </div>
</div>
<div class="t" style="left:17.80px;top:-0.80px;font-size:9.3px;color:#bbbbbb;transform:scaleX(0.8980)">EXPLORER</div>
<div class="t" style="left:17.80px;top:23.60px;font-size:9.9px;font-weight:bold;color:#cccccc;transform:scaleX(0.8901)">UVM_REF_FLOW_1.1</div>
<div class="t" style="left:47.17px;top:41.57px;font-size:11.5px;color:#d98a64;transform:scaleX(1.0333)">.dvt</div>
<div class="t" style="left:54.87px;top:59.93px;font-size:11.5px;color:#cccccc;transform:scaleX(0.9865)">build.config.xml</div>
<div class="t" style="left:54.87px;top:78.29px;font-size:11.5px;color:#d98a64;transform:scaleX(1.0150)">default.build</div>
<div class="t" style="left:47.27px;top:96.65px;font-size:11.5px;color:#cccccc;transform:scaleX(0.9256)">.vscode</div>
<div class="t" style="left:48.20px;top:115.01px;font-size:11.5px;color:#cccccc;transform:scaleX(0.9688)">cpf</div>
<div class="t" style="left:48.20px;top:133.37px;font-size:11.5px;color:#c9a312;transform:scaleX(0.9250)">designs</div>
<div class="t" style="left:48.20px;top:151.73px;font-size:11.5px;color:#cccccc;transform:scaleX(0.9556)">doc</div>
<div class="t" style="left:48.20px;top:170.09px;font-size:11.5px;color:#cccccc;transform:scaleX(0.9551)">dvt_diagrams</div>
<div class="t" style="left:48.20px;top:188.45px;font-size:11.5px;color:#cccccc;transform:scaleX(0.9862)">dvt_run_configurations</div>
<div class="t" style="left:48.20px;top:206.81px;font-size:11.5px;color:#c9a312;transform:scaleX(0.9701)">soc_verification_lib</div>
<div class="t" style="left:54.87px;top:225.17px;font-size:11.5px;color:#c9a312;transform:scaleX(0.9278)">sv_cb_ex_lib</div>
<div class="t" style="left:61.53px;top:243.53px;font-size:11.5px;color:#c9a312;transform:scaleX(0.9433)">apb_subsystem</div>
<div class="t" style="left:61.53px;top:261.89px;font-size:11.5px;color:#c9a312;transform:scaleX(0.9647)">interface_uvc_lib</div>
<div class="t" style="left:68.20px;top:280.25px;font-size:11.5px;color:#c9a312;transform:scaleX(0.9368)">ahb</div>
<div class="t" style="left:74.87px;top:298.61px;font-size:11.5px;color:#c9a312;transform:scaleX(0.8277)">sv</div>
<div class="t" style="left:81.54px;top:316.97px;font-size:11.5px;color:#cccccc;transform:scaleX(0.9354)">ahb_defines.sv</div>
<div class="t" style="left:81.54px;top:335.33px;font-size:11.5px;color:#cccccc;transform:scaleX(0.9218)">ahb_env.sv</div>
<div class="t" style="left:81.54px;top:353.69px;font-size:11.5px;color:#c9a312;transform:scaleX(0.9253)">ahb_if.sv</div>
<div class="t" style="left:81.54px;top:372.05px;font-size:11.5px;color:#cccccc;transform:scaleX(0.9411)">ahb_master_agent.sv</div>
<div class="t" style="left:81.54px;top:390.41px;font-size:11.5px;color:#cccccc;transform:scaleX(0.9479)">ahb_master_driver.sv</div>
<div class="t" style="left:81.54px;top:408.77px;font-size:11.5px;color:#cccccc;transform:scaleX(0.9572)">ahb_master_monitor.sv</div>
<div class="t" style="left:81.54px;top:427.13px;font-size:11.5px;color:#cccccc;transform:scaleX(0.9300)">ahb_master_seq_lib.sv</div>
<div class="t" style="left:81.54px;top:445.49px;font-size:11.5px;color:#cccccc;transform:scaleX(0.9346)">ahb_master_sequencer.sv</div>
<div class="t" style="left:81.54px;top:463.85px;font-size:11.5px;color:#cccccc;transform:scaleX(0.9265)">ahb_pkg.sv</div>
<div class="t" style="left:81.54px;top:482.21px;font-size:11.5px;color:#cccccc;transform:scaleX(0.9200)">ahb_slave_agent.sv</div>
<div class="t" style="left:81.54px;top:500.57px;font-size:11.5px;color:#cccccc;transform:scaleX(0.9291)">ahb_slave_driver.sv</div>
<div class="t" style="left:81.54px;top:518.93px;font-size:11.5px;color:#cccccc;transform:scaleX(0.9390)">ahb_slave_monitor.sv</div>
<div class="t" style="left:81.54px;top:537.29px;font-size:11.5px;color:#cccccc;transform:scaleX(0.9179)">ahb_slave_seq_lib.sv</div>
<div class="t" style="left:81.54px;top:555.65px;font-size:11.5px;color:#cccccc;transform:scaleX(0.9170)">ahb_slave_sequencer.sv</div>
<div class="t" style="left:81.54px;top:574.01px;font-size:11.5px;color:#cccccc;transform:scaleX(0.9565)">ahb_transfer.sv</div>
<div class="t" style="left:81.54px;top:592.37px;font-size:11.5px;color:#cccccc;transform:scaleX(0.9497)">reg_to_ahb_adapter.sv</div>
<div class="t" style="left:73.96px;top:610.73px;font-size:11.5px;color:#cccccc;transform:scaleX(0.9051)">PACKAGE_README.txt</div>
<div class="t" style="left:68.20px;top:629.09px;font-size:11.5px;color:#c9a312;transform:scaleX(0.9263)">apb</div>
<div class="t" style="left:485.70px;top:353.10px;font-size:10.5px;font-weight:bold;color:#c9a312;transform:scaleX(0.9167)">2</div>
<div class="t" style="left:531.30px;top:-0.90px;font-size:11.5px;color:#969696;transform:scaleX(0.9567)">ahb_master_monitor.sv</div>
<div class="t" style="left:697.40px;top:-1.20px;font-size:11.5px;color:#d98a64;transform:scaleX(1.0129)">default.build</div>
<div class="t" style="left:763.90px;top:-1.20px;font-size:11.5px;color:#d98a64;transform:scaleX(0.9000)">1</div>
<div class="t" style="left:517.27px;top:23.50px;font-size:11.5px;color:#a9a9a9;transform:scaleX(1.0333)">.dvt</div>
<div class="t" style="left:568.90px;top:23.50px;font-size:11.5px;color:#a9a9a9;transform:scaleX(1.0032)">default.build</div>
<div id="topb"></div>
<div id="leftb"></div>
</body></html>
